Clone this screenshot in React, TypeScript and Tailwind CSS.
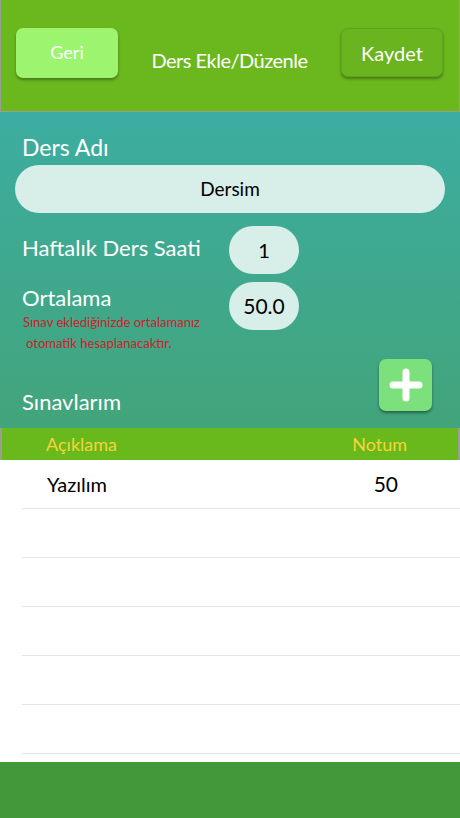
import React from 'react';

const font = { fontFamily: 'Lato, "Noto Sans", sans-serif' };

const grades = [{ name: 'Yazılım', score: '50' }];

export default function App() {
  const emptyRows = 5;
  return (
    <div className="w-[460px] h-[818px] flex flex-col bg-white overflow-hidden" style={font}>
      {/* Header */}
      <div className="h-[112px] shrink-0 bg-[#6bb81e] border-x border-b border-[#9a9f94] flex items-center justify-between pl-[15px] pr-[16px] pb-[6px]">
        <button className="w-[102px] h-[50px] rounded-[7px] bg-[#9cf46f] shadow-[0_2px_3px_rgba(0,0,0,0.35)] text-white text-[18px]">
          Geri
        </button>
        <div className="text-white text-[20px] tracking-tight mt-[14px]">Ders Ekle/Düzenle</div>
        <button className="w-[102px] h-[49px] rounded-[7px] bg-[#6ab51f] border border-[#5fa31c] shadow-[0_2px_3px_rgba(0,0,0,0.35)] text-white text-[20px]">
          Kaydet
        </button>
      </div>

      {/* Form */}
      <div className="h-[316px] shrink-0 bg-gradient-to-b from-[#3cada1] to-[#42a47a] flex flex-col">
        <div className="pl-[22px] pt-[20px] text-white text-[23px] leading-[30px]">Ders Adı</div>
        <div className="mx-[15px] mt-[3px] h-[48px] rounded-full bg-[#d8eee8] flex items-center justify-center text-black text-[19px]">
          Dersim
        </div>
        <div className="flex items-center mt-[13px]">
          <div className="w-[229px] pl-[22px] text-white text-[22px] pb-[5px]">Haftalık Ders Saati</div>
          <div className="w-[70px] h-[48px] rounded-full bg-[#d8eee8] flex items-center justify-center text-black text-[20px]">1</div>
        </div>
        <div className="flex mt-[8px]">
          <div className="w-[229px] pl-[22px]">
            <div className="text-white text-[22px] leading-[26px] pt-[3px]">Ortalama</div>
            <div className="text-[#c9222e] text-[13px] leading-[21px] pl-[1px] pt-[1px]">
              Sınav eklediğinizde ortalamanız
              <br />
              <span className="pl-[3px]">otomatik hesaplanacaktır.</span>
            </div>
          </div>
          <div className="w-[70px] h-[48px] rounded-full bg-[#d8eee8] flex items-center justify-center text-black text-[21px]">50.0</div>
        </div>
        <div className="flex items-end justify-between pl-[22px] pr-[28px] mt-[5px]">
          <div className="text-white text-[22px] leading-[24px] -mb-[3px]">Sınavlarım</div>
          <button className="w-[53px] h-[52px] rounded-[7px] bg-[#7ce07d] shadow-[0_2px_3px_rgba(0,0,0,0.4)] flex items-center justify-center">
            <svg width="34" height="34" viewBox="0 0 34 34">
              <path d="M17 4v26M4 17h26" stroke="white" strokeWidth="7" strokeLinecap="round" />
            </svg>
          </button>
        </div>
      </div>

      {/* Table header */}
      <div className="h-[32px] shrink-0 bg-[#69b81c] border-x-2 border-[#9a9f94] flex items-center justify-between pl-[44px] pr-[51px] text-[#f6d43a] text-[18px]">
        <span>Açıklama</span>
        <span>Notum</span>
      </div>

      {/* Table rows */}
      <div className="flex-1 bg-white">
        {grades.map((g) => (
          <div key={g.name} className="ml-[22px] h-[49px] border-b border-[#e6e6e6] flex items-center justify-between pl-[25px] pr-[62px] text-black text-[20px]">
            <span>{g.name}</span>
            <span className="text-[21px]">{g.score}</span>
          </div>
        ))}
        {Array.from({ length: emptyRows }).map((_, i) => (
          <div key={i} className="ml-[22px] h-[49px] border-b border-[#e6e6e6]" />
        ))}
      </div>

      {/* Bottom bar */}
      <div className="h-[56px] shrink-0 bg-[#43993a]" />
    </div>
  );
}
